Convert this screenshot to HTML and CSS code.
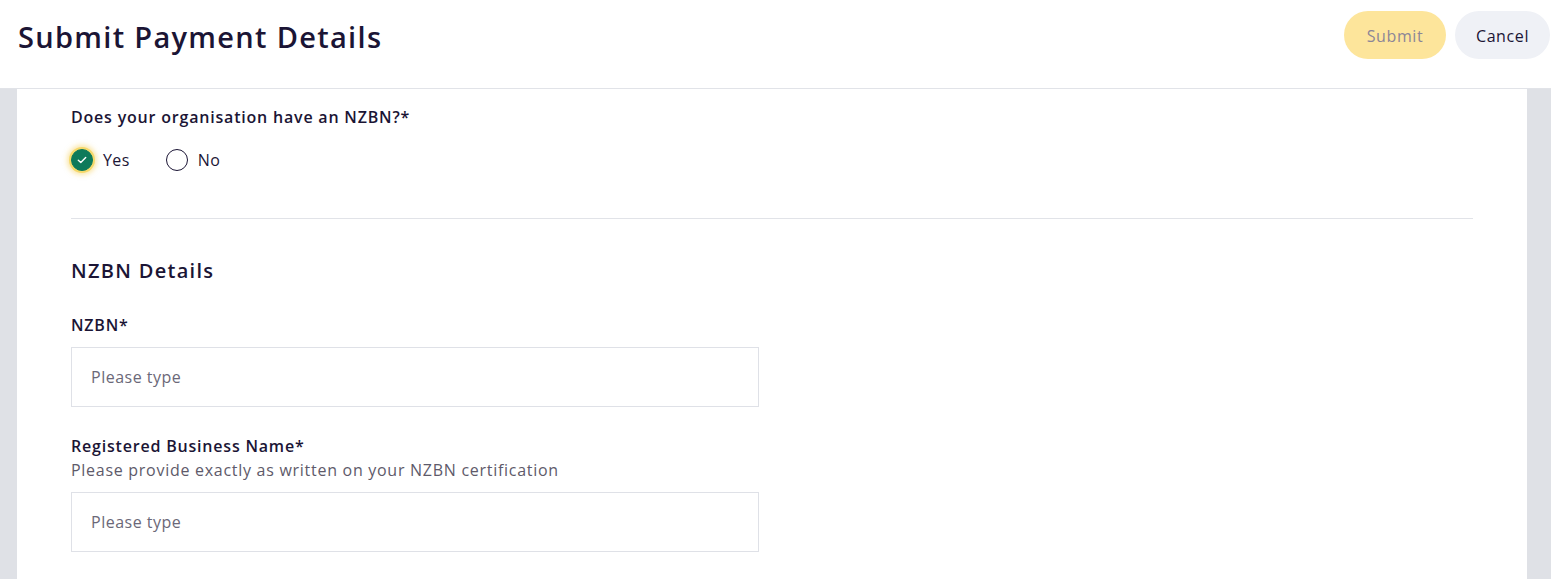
FILE: index.html
```html
<!DOCTYPE html>
<html lang="en">
<head>
<meta charset="utf-8">
<title>Submit Payment Details</title>
<link rel="stylesheet" href="styles.css">
</head>
<body>
<header class="topbar">
  <h1 class="title">Submit Payment Details</h1>
  <div class="actions">
    <button class="btn btn-submit" disabled>Submit</button>
    <button class="btn btn-cancel">Cancel</button>
  </div>
</header>
<main class="page">
  <section class="panel">
    <div class="field">
      <div class="label">Does your organisation have an NZBN?*</div>
      <div class="radios">
        <label class="radio">
          <span class="dot dot-on">
            <svg width="10" height="8" viewBox="0 0 10 8"><path d="M1.3 4.2 L3.8 6.5 L8.7 1.5" fill="none" stroke="#fff" stroke-width="1.4" stroke-linecap="round" stroke-linejoin="round"/></svg>
          </span>
          <span class="radio-text">Yes</span>
        </label>
        <label class="radio">
          <span class="dot"></span>
          <span class="radio-text">No</span>
        </label>
      </div>
    </div>
    <hr class="divider">
    <h2 class="section-title">NZBN Details</h2>
    <div class="field field-input">
      <div class="label">NZBN*</div>
      <div class="input"><span class="placeholder">Please type</span></div>
    </div>
    <div class="field field-input">
      <div class="label">Registered Business Name*</div>
      <div class="help">Please provide exactly as written on your NZBN certification</div>
      <div class="input input-after-help"><span class="placeholder">Please type</span></div>
    </div>
  </section>
</main>
</body>
</html>
```

FILE: styles.css
```css
* { box-sizing: border-box; }
html, body { margin: 0; padding: 0; }
body {
  font-family: "Open Sans", "Noto Sans", sans-serif;
  color: #1b1535;
  background: #dfe1e6;
  height: 579px;
  overflow: hidden;
}
.topbar {
  height: 89px;
  background: #fff;
  border-bottom: 1px solid #e1e3e8;
  display: flex;
  align-items: center;
  justify-content: space-between;
  padding: 0 1px 0 18px;
}
.title {
  margin: 0;
  font-size: 29px;
  font-weight: 600;
  letter-spacing: 1.3px;
  color: #1b1535;
  position: relative;
  top: -8px;
}
.actions {
  display: flex;
  gap: 9px;
  position: relative;
  top: -9px;
}
.btn {
  height: 48px;
  border: none;
  border-radius: 24px;
  font-family: inherit;
  font-size: 16px;
  letter-spacing: 0.6px;
  padding: 2px 10px 0;
}
.btn-submit {
  width: 102px;
  background: #fde59b;
  color: #8c8597;
}
.btn-cancel {
  width: 95px;
  background: #eff1f6;
  color: #1b1535;
}
.page {
  padding: 0 24px 0 17px;
}
.panel {
  background: #fff;
  height: 490px;
  padding: 17px 54px 0 54px;
}
.label {
  font-size: 16px;
  font-weight: 600;
  letter-spacing: 0.8px;
  line-height: 22px;
}
.radios {
  display: flex;
  gap: 36px;
  margin-top: 21px;
}
.radio {
  display: flex;
  align-items: center;
  gap: 10px;
  font-size: 16px;
  letter-spacing: 0.4px;
}
.dot {
  width: 22px;
  height: 22px;
  border-radius: 50%;
  border: 1.5px solid #1b1535;
  display: flex;
  align-items: center;
  justify-content: center;
}
.dot-on {
  background: #0e7a5a;
  border-color: #0e7a5a;
  box-shadow: 0 0 0 2px #f6d96b, 0 0 5px 4px rgba(246, 205, 80, 0.5);
}
.divider {
  border: none;
  border-top: 1px solid #e1e3e8;
  margin: 47px 0 0 0;
}
.section-title {
  margin: 38px 0 0 0;
  font-size: 20px;
  font-weight: 600;
  letter-spacing: 1.3px;
  line-height: 28px;
}
.field-input { margin-top: 29px; }
.field-input + .field-input { margin-top: 28px; }
.help {
  font-size: 16px;
  color: #5e5a6a;
  line-height: 22px;
  letter-spacing: 0.72px;
  margin-top: 2px;
}
.input {
  width: 688px;
  height: 60px;
  border: 1px solid #dfe1e7;
  margin-top: 11px;
  display: flex;
  align-items: center;
  padding: 0 19px;
}
.input-after-help { margin-top: 11px; }
.placeholder {
  font-size: 16px;
  color: #6b6878;
  letter-spacing: 0.5px;
}
```
